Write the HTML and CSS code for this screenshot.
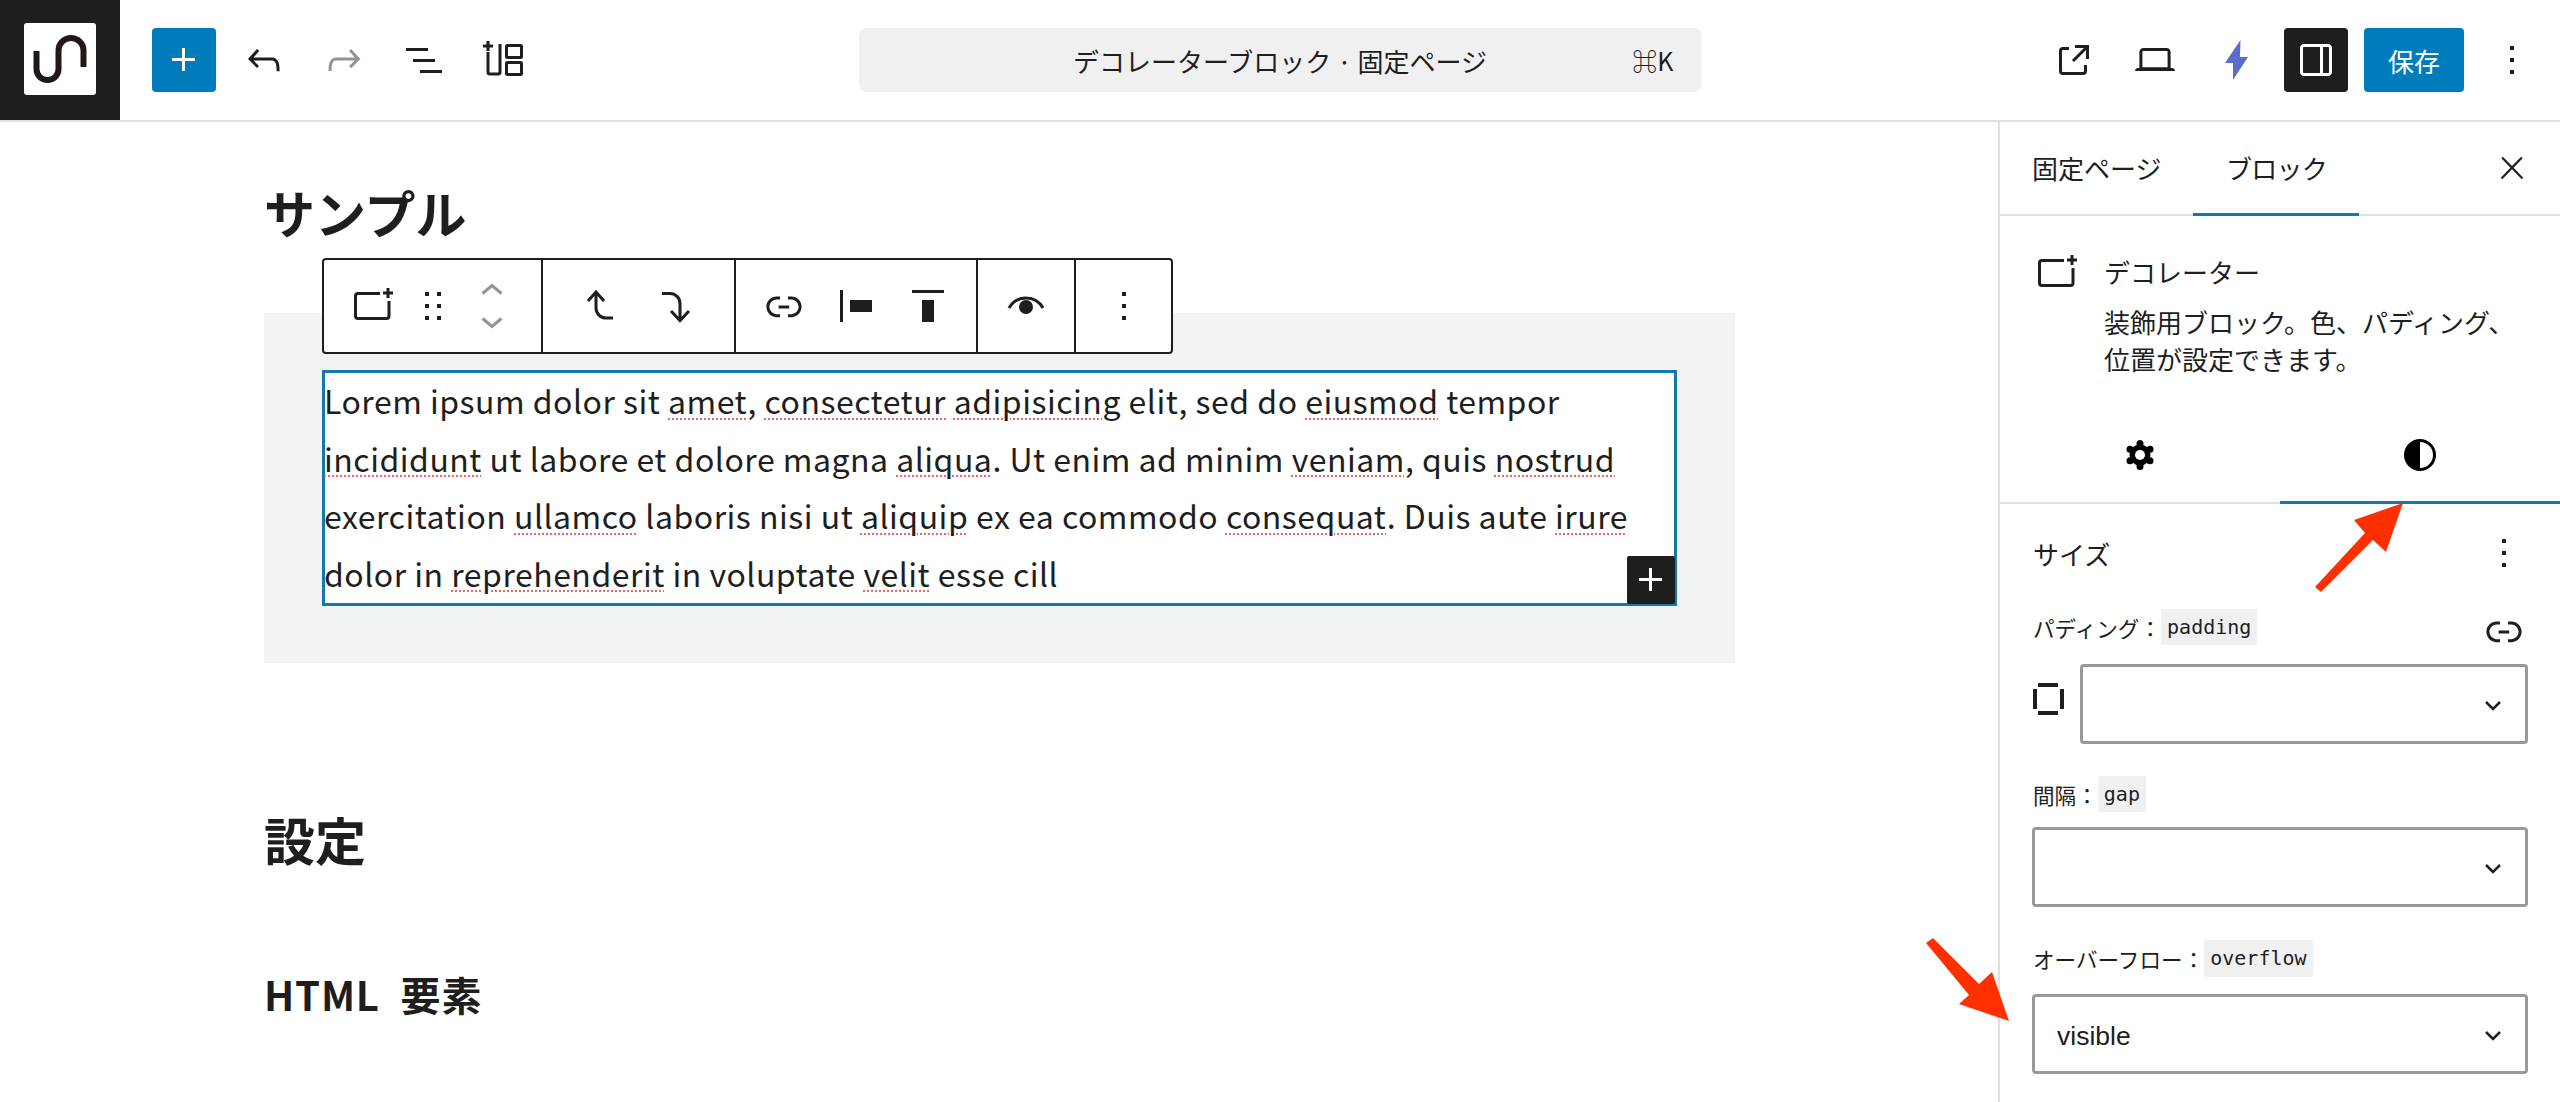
FILE: index.html

```html
<!DOCTYPE html>
<html lang="ja">
<head>
  <meta charset="UTF-8">
  <title>デコレーターブロック</title>
  <link rel="stylesheet" href="styles.css">
</head>
<body>
  <header class="topbar">
    <div class="topbar-left">
      <div class="site-logo">
        <div class="logo-tile">
          <svg width="72" height="72" viewBox="24 23 72 72"><path class="logo-line" d="M36.5 51V69a11 11 0 0 0 22 0V50.5a12.5 12.5 0 0 1 25 0V67"/></svg>
        </div>
      </div>
      <button class="btn-insert">
        <svg width="48" height="48" viewBox="0 0 24 24"><path d="M11 12.5V17.5H12.5V12.5H17.5V11H12.5V6H11V11H6V12.5H11Z"/></svg>
      </button>
      <div class="topbar-tools">
        <svg width="48" height="48" viewBox="0 0 24 24"><path d="M18.3 11.7c-.6-.6-1.4-.9-2.3-.9H6.7l2.9-3.3-1.1-1-4.5 5L8.5 16l1-1-2.7-2.7H16c.5 0 .9.2 1.3.5 1 1 1 3.4 1 4.5v.3h1.5v-.2c0-1.5 0-4.3-1.5-5.7z"/></svg>
        <svg class="is-disabled" width="48" height="48" viewBox="0 0 24 24"><path d="M15.6 6.5l-1.1 1 2.9 3.3H8c-.9 0-1.7.3-2.3.9-1.4 1.5-1.4 4.2-1.4 5.6v.2h1.5v-.3c0-1.1 0-3.5 1-4.5.3-.3.7-.5 1.3-.5h9.2L14.5 15l1.1 1.1 4.6-4.6-4.6-5z"/></svg>
        <svg width="48" height="48" viewBox="0 0 24 24"><path d="M3 6h11v1.5H3V6zm3.5 5.5h11V13h-11v-1.5zM21 17H10v1.5h11V17z"/></svg>
        <svg width="48" height="48" viewBox="0 0 48 48"><path class="line" d="M8 16V36a2 2 0 0 0 2 2H18a2 2 0 0 0 2-2V8"/><path class="line" d="M8 5v10M3 10h10"/><rect class="line" x="26.5" y="9.5" width="15" height="12" rx="1"/><rect class="line" x="26.5" y="26.5" width="15" height="12" rx="1"/></svg>
      </div>
    </div>
    <div class="doc-search">
      <span></span>
      <span class="doc-title">デコレーターブロック · 固定ページ</span>
      <span class="doc-key">⌘K</span>
    </div>
    <div class="topbar-right">
      <svg class="ml-33" width="48" height="48" viewBox="0 0 24 24"><path d="M19.5 4.5h-7V6h4.44l-5.97 5.97 1.06 1.06L18 7.06v4.44h1.5v-7Zm-13 1a2 2 0 0 0-2 2v10a2 2 0 0 0 2 2h10a2 2 0 0 0 2-2v-3H17v3a.5.5 0 0 1-.5.5h-10a.5.5 0 0 1-.5-.5v-10a.5.5 0 0 1 .5-.5h3V5.5h-3Z"/></svg>
      <svg class="ml-33" width="48" height="48" viewBox="0 0 24 24"><path d="M20.5 16h-.7V8c0-1.1-.9-2-2-2H6.2c-1.1 0-2 .9-2 2v8h-.7c-.8 0-1.5.7-1.5 1.5h20c0-.8-.7-1.5-1.5-1.5zM5.7 8c0-.3.2-.5.5-.5h11.6c.3 0 .5.2.5.5v7.6H5.7V8z"/></svg>
      <svg class="ml-32 bolt" width="48" height="48" viewBox="0 0 48 48"><path d="M28.5 4L13 27H21V44L36 21H28Z"/></svg>
      <button class="btn-panel">
        <svg width="48" height="48" viewBox="0 0 24 24"><path d="M18 4H6c-1.1 0-2 .9-2 2v12c0 1.1.9 2 2 2h12c1.1 0 2-.9 2-2V6c0-1.1-.9-2-2-2zM5.5 18V6c0-.3.2-.5.5-.5h8v13H6c-.3 0-.5-.2-.5-.5zm13 0c0 .3-.2.5-.5.5h-2.500v-13H18c.3 0 .5.2.5.5v12z"/></svg>
      </button>
      <button class="btn-save">保存</button>
      <svg class="ml-24" width="48" height="48" viewBox="0 0 24 24"><path d="M13 19h-2v-2h2v2zm0-6h-2v-2h2v2zm0-6h-2V5h2v2z"/></svg>
    </div>
  </header>

  <div class="layout">
    <main class="canvas">
      <h2 class="title">サンプル</h2>
      <div class="deco-block">
        <div class="block-toolbar">
          <div class="tb-group tb-first">
            <svg width="48" height="48" viewBox="0 0 48 48"><path class="line" d="M30 11.500H8a2.500 2.500 0 0 0-2.500 2.500v20a2.500 2.500 0 0 0 2.500 2.500h28.500a2.500 2.500 0 0 0 2.500-2.500V19"/><path class="line" d="M38 6v10M33 11h10"/></svg>
            <svg width="48" height="48" viewBox="0 0 24 24"><path d="M8 7h2V5H8v2zm0 6h2v-2H8v2zm0 6h2v-2H8v2zm6-14v2h2V5h-2zm0 8h2v-2h-2v2zm0 6h2v-2h-2v2z"/></svg>
            <svg width="48" height="48" viewBox="0 0 48 48"><path class="line-off" d="M14.500 11.500L24 3.500l9.500 8M14.500 36.500l9.500 8 9.500-8"/></svg>
          </div>
          <div class="tb-group tb-second">
            <svg width="48" height="48" viewBox="0 0 48 48"><path class="line" d="M12 19l8-9 8 9M20 10v16a10 10 0 0 0 10 10h7"/></svg>
            <svg width="48" height="48" viewBox="0 0 48 48"><path class="line" d="M11 11.500h8a10 10 0 0 1 10 10V38M20 29l9 9.500 9-9.500"/></svg>
          </div>
          <div class="tb-group tb-third">
            <svg width="48" height="48" viewBox="0 0 24 24"><path d="M15.600 7.200H14v1.500h1.600c2 0 3.700 1.700 3.700 3.700s-1.700 3.700-3.700 3.700H14v1.500h1.600c2.800 0 5.200-2.300 5.200-5.200 0-2.900-2.300-5.200-5.200-5.200zM4.700 12.400c0-2 1.700-3.700 3.700-3.700H10V7.200H8.400c-2.900 0-5.200 2.300-5.200 5.200 0 2.900 2.300 5.200 5.200 5.200H10v-1.500H8.400c-2 0-3.700-1.700-3.700-3.700zm4.600.9h5.300v-1.500H9.300v1.500z"/></svg>
            <svg width="48" height="48" viewBox="0 0 48 48"><path d="M8 8h3v32H8zM18 18h22v12H18z"/></svg>
            <svg width="48" height="48" viewBox="0 0 48 48"><path d="M8 8h32v3H8zM18 18h12v22H18z"/></svg>
          </div>
          <div class="tb-group tb-single">
            <svg width="48" height="48" viewBox="0 0 48 48"><path class="line" d="M7 26c4-7 10-10 17-10s13 3 17 10"/><circle cx="24" cy="25" r="7"/></svg>
          </div>
          <div class="tb-group tb-single tb-last">
            <svg width="48" height="48" viewBox="0 0 24 24"><path d="M13 19h-2v-2h2v2zm0-6h-2v-2h2v2zm0-6h-2V5h2v2z"/></svg>
          </div>
        </div>
        <div class="selected-para">
          <p>Lorem ipsum dolor sit <span class="typo">amet</span>, <span class="typo">consectetur</span> <span class="typo">adipisicing</span> elit, sed do <span class="typo">eiusmod</span> tempor <span class="typo">incididunt</span> ut labore et dolore magna <span class="typo">aliqua</span>. Ut enim ad minim <span class="typo">veniam</span>, quis <span class="typo">nostrud</span> exercitation <span class="typo">ullamco</span> laboris nisi ut <span class="typo">aliquip</span> ex ea commodo <span class="typo">consequat</span>. Duis aute <span class="typo">irure</span> dolor in <span class="typo">reprehenderit</span> in voluptate <span class="typo">velit</span> esse cill</p>
          <button class="para-add">
            <svg width="48" height="48" viewBox="0 0 24 24"><path d="M11 12.500V17.500H12.500V12.500H17.500V11H12.500V6H11V11H6V12.500H11Z"/></svg>
          </button>
        </div>
      </div>
      <h2 class="title title-settings">設定</h2>
      <h3 class="subtitle">HTML 要素</h3>
    </main>

    <aside class="sidebar">
      <div class="side-tabs">
        <div class="side-tab">固定ページ</div>
        <div class="side-tab is-active">ブロック</div>
        <svg class="side-close" width="36" height="36" viewBox="0 0 24 24"><path d="M13 11.800l6.100-6.300-1-1-6.100 6.200-6.100-6.200-1 1 6.100 6.300-6.500 6.700 1 1 6.500-6.600 6.500 6.600 1-1z"/></svg>
      </div>
      <div class="block-card">
        <svg width="48" height="48" viewBox="0 0 48 48"><path class="line" d="M30 11.500H8a2.500 2.500 0 0 0-2.500 2.500v20a2.500 2.500 0 0 0 2.500 2.500h28.500a2.500 2.500 0 0 0 2.500-2.500V19"/><path class="line" d="M38 6v10M33 11h10"/></svg>
        <div class="block-card-text">
          <div class="block-name">デコレーター</div>
          <div class="block-desc">装飾用ブロック。色、パディング、位置が設定できます。</div>
        </div>
      </div>
      <div class="inspector-tabs">
        <div class="inspector-tab">
          <svg width="32" height="32" viewBox="0 0 32 32"><circle cx="16" cy="16" r="10.500"/><circle cx="16" cy="4.500" r="3.500"/><circle cx="16" cy="27.500" r="3.500"/><circle cx="6" cy="10.250" r="3.500"/><circle cx="26" cy="10.250" r="3.500"/><circle cx="6" cy="21.750" r="3.500"/><circle cx="26" cy="21.750" r="3.500"/><circle class="gear-hole" cx="16" cy="16" r="5"/></svg>
        </div>
        <div class="inspector-tab is-active">
          <svg width="32" height="32" viewBox="0 0 32 32"><circle class="contrast-ring" cx="16" cy="16" r="14.500"/><path d="M16 1.500a14.500 14.500 0 0 0 0 29z"/></svg>
        </div>
      </div>
      <div class="panel">
        <div class="panel-head">
          <span>サイズ</span>
          <svg width="48" height="48" viewBox="0 0 24 24"><path d="M13 19h-2v-2h2v2zm0-6h-2v-2h2v2zm0-6h-2V5h2v2z"/></svg>
        </div>
        <div class="field-label field-first">
          <span>パディング：</span><code>padding</code>
          <svg class="field-link" width="48" height="48" viewBox="0 0 24 24"><path d="M15.600 7.200H14v1.500h1.600c2 0 3.700 1.700 3.700 3.700s-1.700 3.700-3.700 3.700H14v1.500h1.600c2.800 0 5.200-2.300 5.200-5.200 0-2.900-2.300-5.200-5.200-5.200zM4.700 12.400c0-2 1.700-3.700 3.700-3.700H10V7.200H8.400c-2.900 0-5.200 2.300-5.200 5.200 0 2.900 2.300 5.200 5.200 5.200H10v-1.500H8.400c-2 0-3.700-1.700-3.700-3.700zm4.600.9h5.300v-1.500H9.300v1.500z"/></svg>
        </div>
        <div class="padding-row">
          <svg class="padding-icon" width="32" height="32" viewBox="0 0 32 32"><path d="M5 0h20v4H5zM5 28h20v4H5zM0 6h4v20H0zM27 6h4v20h-4z"/></svg>
          <div class="select">
            <span></span>
            <svg width="16" height="10" viewBox="0 0 16 10"><path class="chev" d="M1 1l7 7 7-7"/></svg>
          </div>
        </div>
        <div class="field-label">
          <span>間隔：</span><code>gap</code>
        </div>
        <div class="select">
          <span></span>
          <svg width="16" height="10" viewBox="0 0 16 10"><path class="chev" d="M1 1l7 7 7-7"/></svg>
        </div>
        <div class="field-label field-last">
          <span>オーバーフロー：</span><code>overflow</code>
        </div>
        <div class="select">
          <span>visible</span>
          <svg width="16" height="10" viewBox="0 0 16 10"><path class="chev" d="M1 1l7 7 7-7"/></svg>
        </div>
      </div>
    </aside>
  </div>

  <svg class="callouts" width="2560" height="1102" viewBox="0 0 2560 1102">
    <polygon points="2403,503 2386,552 2373,540 2321,592 2315,587 2365,533 2354,520"/>
    <polygon points="2009,1021 1959,1004 1969,995 1926,943 1933,938 1979,984 1992,972"/>
  </svg>
</body>
</html>
```

FILE: styles.css

```css
* {
  box-sizing: border-box;
}

body {
  margin: 0;
  width: 2560px;
  height: 1102px;
  overflow: hidden;
  background: #fff;
  color: #1e1e1e;
  font-family: "Noto Sans CJK JP", "Noto Sans", sans-serif;
  font-size: 26px;
}

svg {
  display: block;
  flex: none;
  fill: #1e1e1e;
}

button {
  border: none;
  padding: 0;
  cursor: pointer;
  font-family: inherit;
}

.line {
  fill: none;
  stroke: #1e1e1e;
  stroke-width: 3;
}

.line-off {
  fill: none;
  stroke: #949494;
  stroke-width: 3;
}

/* top bar */
.topbar {
  display: grid;
  grid-template-columns: 1fr 843px 1fr;
  align-items: center;
  height: 122px;
  border-bottom: 2px solid #e0e0e0;
}

.topbar-left {
  display: flex;
  align-items: center;
}

.site-logo {
  display: flex;
  width: 120px;
  height: 120px;
  padding: 23px 24px 25px;
  background: #1e1e1e;
}

.logo-tile {
  width: 72px;
  height: 72px;
  border-radius: 3px;
  background: #fff;
}

.logo-line {
  fill: none;
  stroke: #231815;
  stroke-width: 6;
}

.btn-insert {
  width: 64px;
  height: 64px;
  margin-left: 32px;
  padding: 8px;
  border-radius: 4px;
  background: #007cba;
}

.btn-insert svg {
  fill: #fff;
}

.topbar-tools {
  display: flex;
  gap: 32px;
  margin-left: 24px;
}

.is-disabled {
  fill: #949494;
}

.doc-search {
  display: grid;
  grid-template-columns: 1fr auto 1fr;
  align-items: center;
  height: 64px;
  padding: 0 28px;
  border-radius: 8px;
  background: #f0f0f0;
  font-size: 26px;
}

.doc-key {
  justify-self: end;
  font-size: 25px;
}

.topbar-right {
  display: flex;
  align-items: center;
  justify-content: flex-end;
  padding-right: 24px;
}

.ml-33 {
  margin-right: 33px;
}

.ml-32 {
  margin-right: 24px;
}

.ml-24 {
  margin-left: 24px;
}

.bolt {
  fill: #5b6ccb;
}

.btn-panel {
  width: 64px;
  height: 64px;
  padding: 8px;
  border-radius: 4px;
  background: #1e1e1e;
}

.btn-panel svg {
  fill: #fff;
}

.btn-save {
  width: 100px;
  height: 64px;
  margin-left: 16px;
  border-radius: 4px;
  background: #007cba;
  color: #fff;
  font-size: 26px;
}

/* editor area */
.layout {
  display: flex;
  height: 980px;
}

.canvas {
  flex: 1;
  padding-left: 264px;
}

.title {
  margin: 55px 0 66px;
  font-size: 51px;
  font-weight: 700;
  line-height: 70px;
}

.title-settings {
  margin: 141px 0 0;
}

.subtitle {
  margin: 90px 0 0;
  font-size: 40px;
  font-weight: 700;
  line-height: 60px;
  letter-spacing: 0.8px;
  word-spacing: 11px;
}

.deco-block {
  position: relative;
  width: 1471px;
  padding: 57px 58px;
  background: #f2f3f5;
}

.block-toolbar {
  position: absolute;
  top: -55px;
  left: 58px;
  display: flex;
  align-items: center;
  height: 96px;
  border: 2px solid #1e1e1e;
  border-radius: 4px;
  background: #fff;
}

.tb-group {
  display: flex;
  align-items: center;
  height: 92px;
  border-right: 2px solid #1e1e1e;
}

.tb-first {
  gap: 11px;
  padding: 0 25px 0 26px;
}

.tb-second {
  gap: 27px;
  padding: 0 35px 0 33px;
}

.tb-third {
  gap: 24px;
  padding: 0 24px 0 24px;
}

.tb-single {
  padding: 0 24px;
}

.tb-last {
  padding-right: 23px;
  border-right: none;
}

.selected-para {
  position: relative;
  border: 3px solid #1478a8;
  background: #fff;
}

.selected-para p {
  margin: -1px 0 1px -1px;
  font-size: 32px;
  line-height: 57.500px;
  letter-spacing: 0.5px;
}

.typo {
  text-decoration: underline dotted #e46a6a 2px;
  text-underline-offset: 4px;
}

.para-add {
  position: absolute;
  right: -1px;
  bottom: -1px;
  width: 48px;
  height: 48px;
  border-radius: 2px;
  background: #1e1e1e;
}

.para-add svg {
  fill: #fff;
}

/* sidebar */
.sidebar {
  flex: none;
  width: 562px;
  border-left: 2px solid #e0e0e0;
}

.side-tabs {
  display: flex;
  align-items: center;
  height: 94px;
  padding-right: 30px;
  border-bottom: 2px solid #e0e0e0;
}

.side-tab {
  display: flex;
  align-items: center;
  height: 94px;
  margin-bottom: -2px;
  padding: 0 32px;
  border-bottom: 3px solid transparent;
  font-size: 26px;
}

.side-tab.is-active {
  justify-content: center;
  width: 166px;
  padding: 0;
  border-bottom-color: #1478a8;
  letter-spacing: -0.7px;
}

.side-close {
  margin-left: auto;
}

.block-card {
  display: flex;
  gap: 22px;
  padding: 33px 32px 32px 34px;
}

.block-name {
  margin-top: 5px;
  line-height: 36px;
}

.block-desc {
  max-width: 420px;
  margin-top: 13px;
  font-size: 26px;
  line-height: 37px;
}

.inspector-tabs {
  display: flex;
  height: 95px;
  border-bottom: 2px solid #e0e0e0;
}

.inspector-tab {
  display: flex;
  flex: 1;
  flex-shrink: 0;
  align-items: center;
  justify-content: center;
  height: 95px;
  border-bottom: 3px solid transparent;
}

.inspector-tab.is-active {
  border-bottom-color: #1478a8;
}

.gear-hole {
  fill: #fff;
}

.contrast-ring {
  fill: #fff;
  stroke: #000;
  stroke-width: 3;
}

.inspector-tab svg {
  fill: #000;
}

.panel {
  padding: 25px 33px 0;
}

.panel-head {
  display: flex;
  align-items: center;
  justify-content: space-between;
  height: 48px;
  margin-right: -1px;
  font-size: 26px;
}

.field-label {
  display: flex;
  align-items: center;
  height: 36px;
  margin: 32px 0 15px;
  font-size: 21.600px;
}

.field-first {
  margin: 32px 0 19px;
}

.field-last {
  height: 37px;
  margin: 33px 0 17px;
}

.field-label code {
  height: 100%;
  padding: 0 6px;
  background: #f0f0f0;
  font-family: "DejaVu Sans Mono", "Liberation Mono", monospace;
  font-size: 20px;
  line-height: 36px;
}

.field-link {
  margin: 8px -1px 0 auto;
}

.padding-row {
  display: flex;
  gap: 16px;
}

.padding-icon {
  margin-top: 19px;
}

.padding-row .select {
  flex: 1;
}

.select {
  display: flex;
  align-items: center;
  justify-content: space-between;
  height: 80px;
  margin: 0 -1px;
  padding: 4px 24px 0 22px;
  border: 3px solid #999;
  border-radius: 4px;
  font-family: "Liberation Sans", sans-serif;
  font-size: 26.500px;
}

.chev {
  fill: none;
  stroke: #1e1e1e;
  stroke-width: 2.500;
}

.callouts {
  position: absolute;
  top: 0;
  left: 0;
  fill: #ff3000;
  pointer-events: none;
}
```
